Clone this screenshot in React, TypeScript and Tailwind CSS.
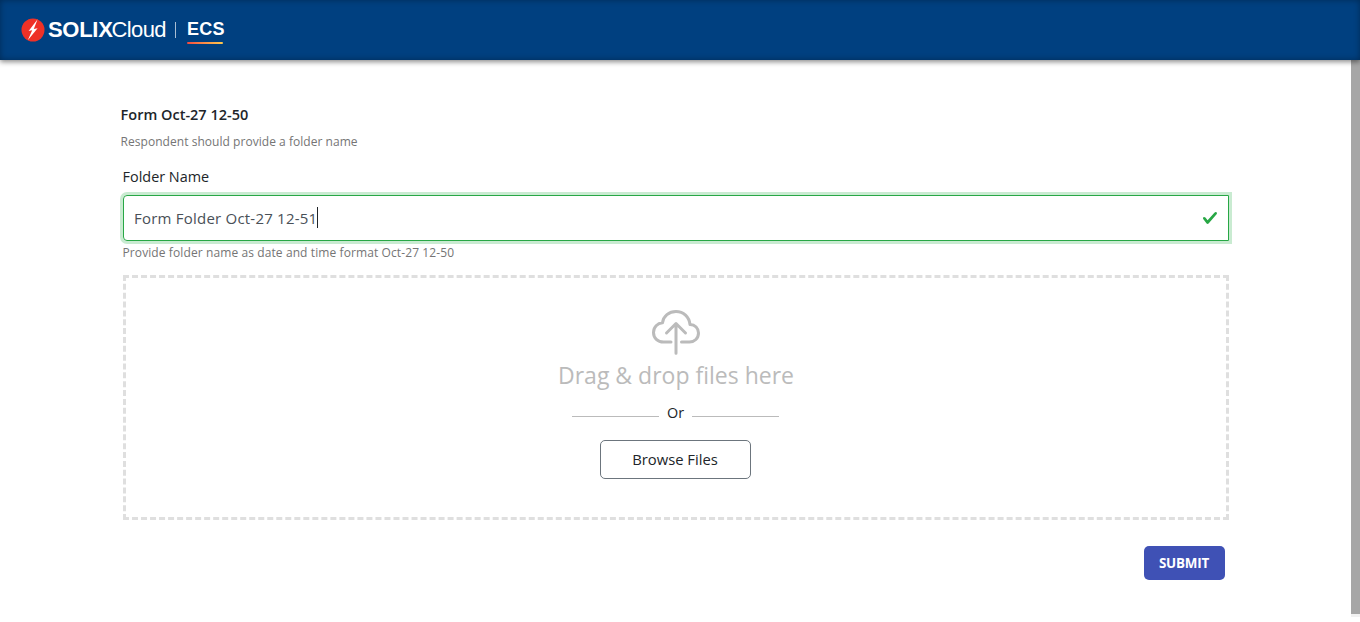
import React from "react";

function BoltLogo() {
  return (
    <svg className="mt-[18px] h-6 w-6 shrink-0" viewBox="0 0 24 24">
      <circle cx="12" cy="12" r="11.5" fill="#ee3127" />
      <path d="M16.6 1.2 7.6 12.9 11.2 12.300 6.800 22.200 16.600 10.300 12.800 10.900Z" fill="#fff" />
    </svg>
  );
}

function Header() {
  return (
    <header className="relative z-10 flex h-[60px] w-full items-start bg-[#004080] pl-[21px] font-['Liberation_Sans',sans-serif] text-white shadow-[0_2px_5px_rgba(0,0,0,0.45),inset_0_0_6px_rgba(0,0,0,0.35)]">
      <BoltLogo />
      <div className="ml-[3px] mt-[18px] flex w-[118px] whitespace-nowrap text-[22px] leading-6">
        <span className="font-bold tracking-[-0.3px]">SOLIX</span>
        <span className="ml-[-1px] tracking-[-0.6px]">Cloud</span>
      </div>
      <div className="ml-[9px] mt-[22px] h-4 w-px bg-[#a9bed3]" />
      <div className="ml-[11px] mt-[17px] w-[36px]">
        <div className="whitespace-nowrap text-[18px] font-bold leading-6 tracking-[0.2px]">ECS</div>
        <div className="mt-px h-[2px] rounded-full bg-linear-to-r from-[#f2473f] to-[#fdc94d]" />
      </div>
    </header>
  );
}

function UploadIcon() {
  return (
    <svg className="h-[46px] w-[50px]" viewBox="0 0 50 46" fill="none" stroke="#bbb" strokeWidth="3" strokeLinecap="round" strokeLinejoin="round">
      <path d="M20 33H12.5C6.7 33 2.5 29 2.5 23.5C2.5 18 6.5 14.2 11.5 13.8C12.3 7 18 2.5 25 2.5C32.500 2.500 38.200 8 39 15.500C44 15.500 47.500 19.200 47.500 24C47.500 29.200 43.500 33 38.500 33H30.500" />
      <path d="M25 44.300V14.500M15.500 24 25 14.500 34.500 24" />
    </svg>
  );
}

export default function App() {
  return (
    <div className="flex h-[622px] w-full flex-col overflow-hidden bg-white font-['Open_Sans',sans-serif] text-[#212529]">
      <Header />
      <div className="flex min-h-0 flex-1 justify-between">
        <main className="ml-[120px] w-[1109px] pt-[43px]">
          <h1 className="h-6 whitespace-nowrap pl-[0.6px] text-[14.5px] font-semibold leading-6">Form Oct-27 12-50</h1>
          <p className="mt-[5px] h-5 whitespace-nowrap pl-[0.6px] text-[12px] leading-5 tracking-[0.04px] text-[#757575]">Respondent should provide a folder name</p>
          <div className="ml-[3px]">
            <label className="ml-[-0.4px] mt-[13px] block h-6 whitespace-nowrap text-[14.4px] leading-6">Folder Name</label>
            <div className="mt-[6px] flex h-[46px] items-center justify-between rounded-l-[4px] border border-[#28a745] pl-[10px] pr-[10px] shadow-[0_0_0_3px_#c9ebd1]">
              <div className="flex items-center text-[15px] text-[#495057]">
                <span className="whitespace-nowrap tracking-[0.22px]">Form Folder Oct-27 12-51</span>
                <span className="mb-[2px] h-[21px] w-px bg-[#212529]" />
              </div>
              <svg className="h-4 w-4" viewBox="0 0 8 8">
                <path fill="#28a745" d="M2.3 6.73.6 4.53c-.4-1.04.46-1.4 1.1-.8l1.1 1.4 3.4-3.8c.6-.63 1.600-.27 1.200.7l-4 4.600c-.43.5-.8.4-1.100.1z" />
              </svg>
            </div>
            <p className="ml-[-0.5px] mt-[2px] h-5 whitespace-nowrap text-[12px] leading-5 tracking-[0.1px] text-[#757575]">Provide folder name as date and time format Oct-27 12-50</p>
            <section className="mt-3 flex h-[245px] flex-col items-center border-[3px] border-dashed border-[#dfdfdf] pt-[31px]">
              <UploadIcon />
              <div className="mt-[3px] h-[34px] whitespace-nowrap text-[23px] leading-[34px] text-[#bbb]">Drag &amp; drop files here</div>
              <div className="mr-px mt-[9px] flex h-6 w-[207px] items-center justify-between">
                <span className="mt-[7px] h-px w-[87px] bg-[#bbb]" />
                <span className="text-[14.4px] leading-6">Or</span>
                <span className="mt-[7px] h-px w-[87px] bg-[#bbb]" />
              </div>
              <button className="mr-[2px] mt-[15px] h-[39px] w-[151px] whitespace-nowrap rounded-[5px] border border-[#6c757d] text-[14.8px]">Browse Files</button>
            </section>
            <div className="mt-[26px] flex justify-end pr-1">
              <button className="h-[34px] w-[81px] rounded-[5px] bg-[#3f51b5] pr-px pt-px text-[13.4px] font-bold tracking-[-0.2px] text-white">SUBMIT</button>
            </div>
          </div>
        </main>
        <div className="h-[557px] w-[9px] bg-[#f1f1f1]">
          <div className="h-[554px] bg-[#a6a6a6]" />
        </div>
      </div>
    </div>
  );
}
